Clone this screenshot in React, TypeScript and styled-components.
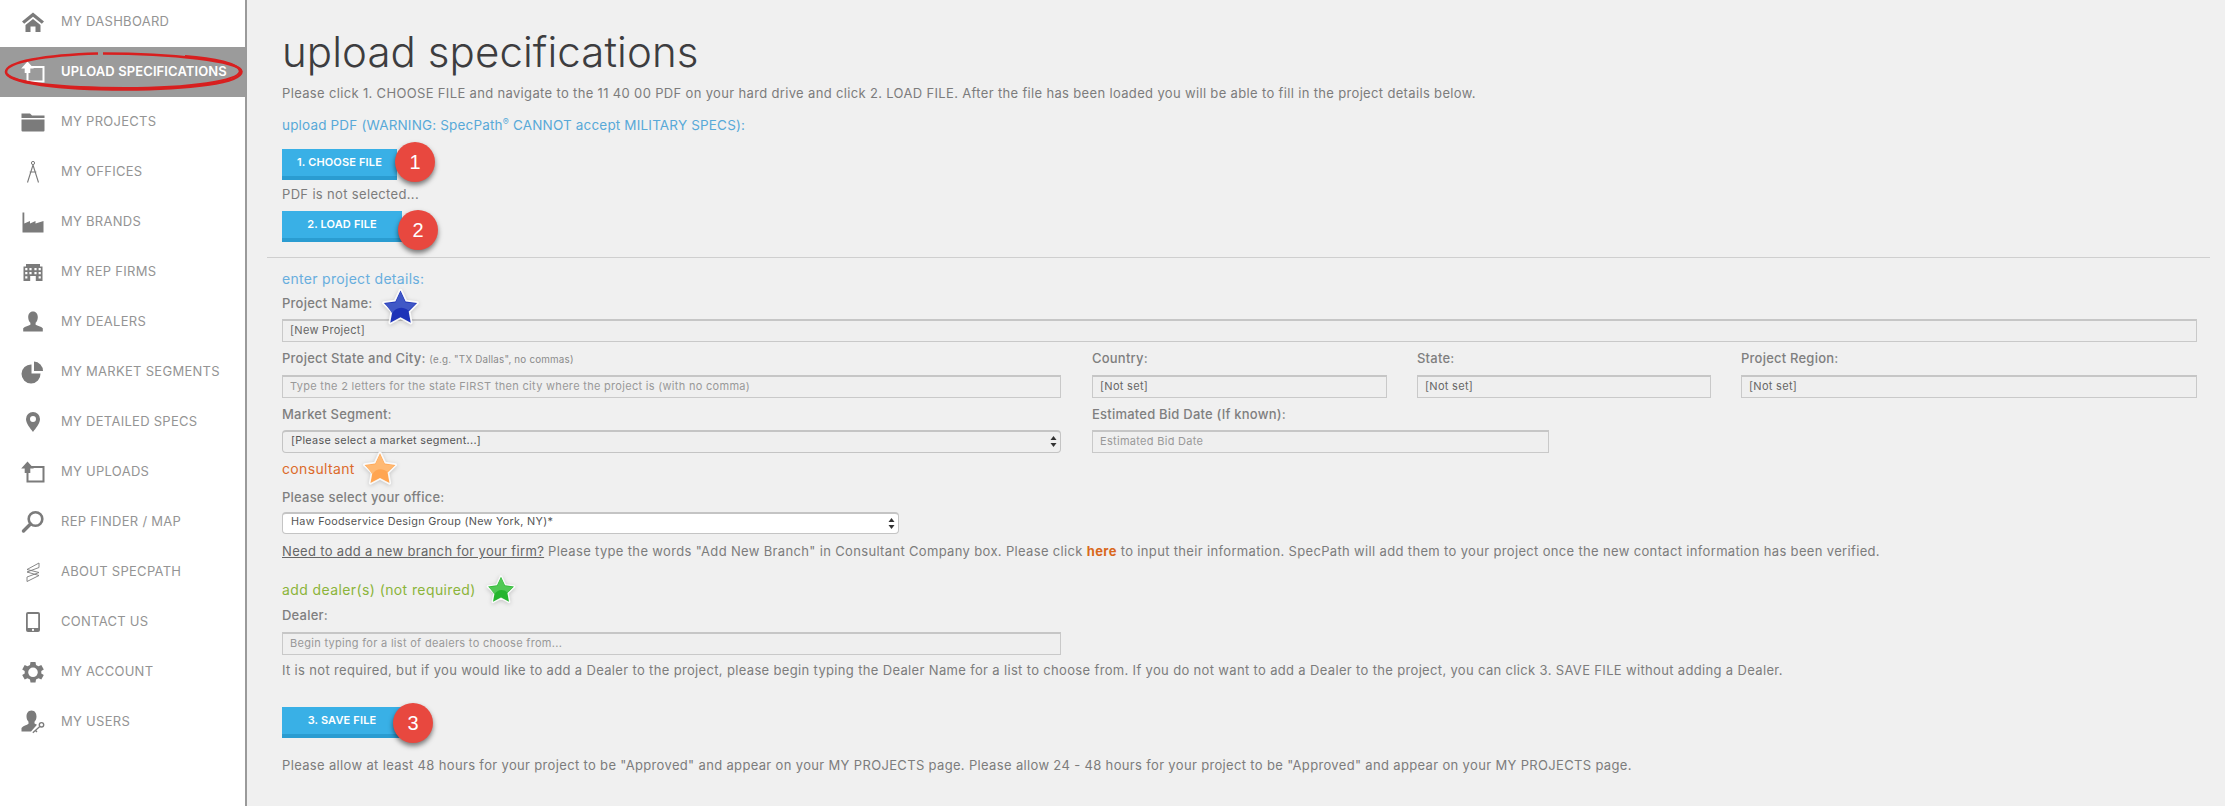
import React from "react";
import styled, { createGlobalStyle } from "styled-components";

const Global = createGlobalStyle`
  html, body { margin: 0; padding: 0; background: #f0f0f0; }
  body { font-family: Inter, "Noto Sans", "Liberation Sans", sans-serif; overflow: hidden; }
  * { box-sizing: border-box; }
`;

const Page = styled.div`
  display: flex;
  width: 2225px;
  height: 806px;
  overflow: hidden;
`;

const Sidebar = styled.nav`
  width: 247px;
  flex: none;
  background: #fff;
  border-right: 2px solid #9a9a9a;
  padding-top: 0;
`;

const NavList = styled.div`
  margin-top: -3px;
  display: flex;
  flex-direction: column;
`;

const NavRow = styled.div<{ $active?: boolean }>`
  position: relative;
  height: 50px;
  display: flex;
  align-items: center;
  padding: 0 0 3px 20px;
  gap: 15px;
  background: ${(p) => (p.$active ? "#9b9b9b" : "transparent")};
  color: ${(p) => (p.$active ? "#fff" : "#949494")};
  font-size: 13px;
  font-weight: ${(p) => (p.$active ? 600 : 400)};
  letter-spacing: ${(p) => (p.$active ? 0.1 : 0.28)}px;
  white-space: nowrap;
`;

const NavIcon = styled.svg`
  width: 26px;
  height: 26px;
  flex: none;
  margin-top: 3px;
  fill: currentColor;
`;

const IconTint = styled.g<{ $active?: boolean }>`
  color: ${(p) => (p.$active ? "#fff" : "#7b7b7b")};
`;

const Scribble = styled.svg`
  position: absolute;
  left: 0;
  top: 0;
  width: 245px;
  height: 50px;
`;

const Main = styled.main`
  flex: 1;
  min-width: 0;
  padding: 22px 0 0 35px;
  color: #7c7c7c;
`;

const Title = styled.h1`
  margin: 0;
  height: 60px;
  line-height: 60px;
  font-size: 42px;
  font-weight: 300;
  letter-spacing: 0.08px;
  color: #3d3d3f;
`;

const Text = styled.p<{ $mt: number }>`
  position: relative;
  margin: ${(p) => p.$mt}px 0 0;
  height: 18px;
  line-height: 18px;
  font-size: 13px;
  letter-spacing: 0.34px;
  color: #7c7c7c;
  white-space: nowrap;
`;

const Heading = styled.h2<{ $mt: number; $color: string; $size?: number; $ls?: number }>`
  position: relative;
  margin: ${(p) => p.$mt}px 0 0;
  height: 18px;
  line-height: 18px;
  font-size: ${(p) => p.$size ?? 14}px;
  font-weight: 400;
  letter-spacing: ${(p) => p.$ls ?? 0.35}px;
  color: ${(p) => p.$color};
  white-space: nowrap;
`;

const Sup = styled.sup`
  font-size: 9px;
  line-height: 0;
`;

const Underlined = styled.span`
  text-decoration: underline;
  color: #666;
`;

const Here = styled.b`
  color: #d9681d;
`;

const ButtonWrap = styled.div<{ $mt: number; $w: number }>`
  position: relative;
  margin-top: ${(p) => p.$mt}px;
  width: ${(p) => p.$w}px;
  height: 31px;
`;

const Button = styled.button`
  width: 100%;
  height: 31px;
  padding: 0 0 1px;
  border: 0;
  border-bottom: 4px solid #2a9cd1;
  background: #39b0e6;
  color: #fff;
  font: 600 11px Inter, sans-serif;
  letter-spacing: 0.15px;
`;

const Badge = styled.span<{ $left: number; $top: number }>`
  position: absolute;
  left: ${(p) => p.$left}px;
  top: ${(p) => p.$top}px;
  width: 40px;
  height: 40px;
  border-radius: 50%;
  background: #e8483f;
  box-shadow: 0 3px 5px rgba(0, 0, 0, 0.5);
  color: #fff;
  font: 400 20px/40px "Liberation Sans", sans-serif;
  text-align: center;
`;

const Rule = styled.hr`
  margin: 15px 0 0 -15px;
  width: 1943px;
  height: 1px;
  border: 0;
  background: #cfcfcf;
`;

const FieldRow = styled.div<{ $mt: number }>`
  display: flex;
  gap: 30px;
  margin-top: ${(p) => p.$mt}px;
`;

const Field = styled.div<{ $w: number; $mr?: number }>`
  width: ${(p) => p.$w}px;
  margin-right: ${(p) => p.$mr ?? 0}px;
  flex: none;
  display: flex;
  flex-direction: column;
  gap: 7.5px;
`;

const Label = styled.label`
  display: block;
  height: 18px;
  line-height: 18px;
  font-size: 13px;
  font-weight: 500;
  letter-spacing: 0.22px;
  color: #7f7f7f;
  white-space: nowrap;
`;

const Hint = styled.span`
  font-size: 9.8px;
  font-weight: 400;
  letter-spacing: 0.2px;
  color: #8a8a8a;
`;

const Input = styled.input<{ $w?: number; $mt?: number }>`
  display: block;
  width: ${(p) => (p.$w ? `${p.$w}px` : "100%")};
  height: 23px;
  margin-top: ${(p) => p.$mt ?? 0}px;
  padding: 0 7px 2px;
  border: 1px solid #c9c9c9;
  border-top: 2px solid #c6c6c6;
  border-radius: 0;
  background: #efefef;
  color: #666;
  font: 400 11px Inter, sans-serif;
  letter-spacing: 0.3px;
  outline: none;
  &::placeholder { color: #999; opacity: 1; }
`;

const SelectBox = styled.div<{ $w: number; $white?: boolean; $mt?: number }>`
  position: relative;
  width: ${(p) => p.$w}px;
  height: ${(p) => (p.$white ? 22 : 23)}px;
  margin-top: ${(p) => p.$mt ?? 0}px;
  border: 1px solid #c4c4c4;
  border-top-width: 2px;
  border-radius: 4px;
  background: ${(p) => (p.$white ? "#fff" : "#efefef")};
  color: #555;
  font-size: 10.8px;
  line-height: ${(p) => (p.$white ? 16 : 18)}px;
  letter-spacing: 0.3px;
  padding-left: 8px;
  white-space: nowrap;
`;

const Arrows = styled.svg`
  position: absolute;
  right: 3px;
  top: 4px;
  width: 7px;
  height: 11px;
  fill: #333;
`;

const StarMark = styled.svg<{ $left: number; $top: number; $size: number }>`
  position: absolute;
  left: ${(p) => p.$left}px;
  top: ${(p) => p.$top}px;
  width: ${(p) => p.$size}px;
  height: ${(p) => p.$size}px;
  filter: drop-shadow(0 1px 2px rgba(0, 0, 0, 0.2));
  overflow: visible;
`;

const STAR = "M20 3.5 25 14.2 36.2 15.700 28 23.800 30 34.800 20 29.500 10 34.800 12 23.800 3.800 15.700 15 14.200Z";
const GLOSS = "M20 4.500 24.800 15 35 16.200 27.800 23C22 18 15 20 11.800 25.500L5 16.200 15.200 15Z";

const Star = ({ left, top, size, base, light }: { left: number; top: number; size: number; base: string; light: string }) => (
  <StarMark $left={left} $top={top} $size={size} viewBox="0 0 40 40">
    <path d={STAR} fill="#fff" fillOpacity="0.85" stroke="#fff" strokeOpacity="0.85" strokeWidth="3.500" strokeLinejoin="round" />
    <path d={STAR} fill={base} />
    <path d={GLOSS} fill={light} />
  </StarMark>
);

const icons: Record<string, React.ReactNode> = {
  home: (
    <>
      <path d="M13 3.5 24 12.5 21.8 14.8 13 7.8 4.2 14.8 2 12.5Z" />
      <path d="M13 10 20.5 16V23H15.5V17.5H10.5V23H5.5V16Z" />
    </>
  ),
  upload: (
    <>
      <path d="M11 8H23.5V22.5H7.5V13.500" fill="none" stroke="currentColor" strokeWidth="2" />
      <path d="M7.500 2.500 13.800 9.500H10.300V14H4.700V9.500H1.200Z" />
    </>
  ),
  folder: (
    <>
      <path d="M1.5 4.5H10L12 6.5H24.5V9H1.5Z" />
      <path d="M1.5 10.5H24.5V21.5Q24.5 22.5 23.5 22.5H2.5Q1.5 22.5 1.5 21.5Z" />
    </>
  ),
  compass: (
    <>
      <circle cx="13" cy="4" r="1.6" fill="none" stroke="currentColor" strokeWidth="1" />
      <path d="M13 6 7.5 23.5M13 6 18.5 23.5M9.7 13 16.3 13" fill="none" stroke="currentColor" strokeWidth="1.1" />
    </>
  ),
  factory: <path d="M2.5 3.5H4.3V14.5L10 12V14.5L15.5 12V14.5L23.5 12V23.5H2.5Z" />,
  building: (
    <path
      fillRule="evenodd"
      d="M6 5H20V7.500H22.500V22H15.800V17H10.200V22H3.500V7.500H6ZM5.200 9V11.200H7.400V9ZM9.400 9V11.200H11.600V9ZM14.400 9V11.200H16.600V9ZM18.600 9V11.200H20.800V9ZM5.200 13V15.200H7.400V13ZM9.400 13V15.200H11.600V13ZM14.400 13V15.200H16.600V13ZM18.600 13V15.200H20.800V13ZM5.200 17.200V19.400H7.400V17.200ZM18.600 17.200V19.400H20.800V17.200Z"
    />
  ),
  person: (
    <path d="M13 2.5C16.2 2.5 17.8 5 17.8 8.2 17.8 10.8 16.6 12.8 15.6 13.8V15.8C17.5 16.8 21 17.5 22.8 19.2V22.5H3.2V19.2C5 17.5 8.5 16.8 10.4 15.8V13.8C9.4 12.8 8.2 10.8 8.2 8.2 8.2 5 9.8 2.5 13 2.5Z" />
  ),
  pie: (
    <>
      <path d="M11.5 5.5V14.5H20.5A9.5 9.5 0 1 1 11.5 5.5Z" />
      <path d="M14 2.5A9.5 9.5 0 0 1 23 12H14Z" />
    </>
  ),
  pin: (
    <path
      fillRule="evenodd"
      d="M13 3A7 7 0 0 1 20 10C20 14.5 15.5 19.5 13 23 10.500 19.500 6 14.500 6 10A7 7 0 0 1 13 3ZM13 7A3 3 0 1 0 13 13 3 3 0 1 0 13 7Z"
    />
  ),
  magnifier: (
    <>
      <circle cx="15.5" cy="10" r="6.8" fill="none" stroke="currentColor" strokeWidth="2.6" />
      <path d="M10.5 15 3.5 22" fill="none" stroke="currentColor" strokeWidth="3.4" strokeLinecap="round" />
    </>
  ),
  spec: (
    <path
      d="M19 4 7 10.500 19 13.500 7 18 7 22.500 19 16.500 7 13 19 8.500Z"
      fill="none"
      stroke="currentColor"
      strokeWidth="0.9"
      strokeLinejoin="round"
    />
  ),
  phone: (
    <path
      fillRule="evenodd"
      d="M8 3H18Q20 3 20 5V21Q20 23 18 23H8Q6 23 6 21V5Q6 3 8 3ZM7.800 5V19H18.200V5ZM13 19.800A1.100 1.100 0 1 0 13 22 1.100 1.100 0 1 0 13 19.800Z"
    />
  ),
  gear: (
    <path
      fillRule="evenodd"
      d="M10.500 3H15.500L16 6 18.500 7.300 21.300 6 23.800 10.500 21.300 12V14.500L23.800 16 21.300 20.500 18.500 19.200 16 20.500 15.500 23.500H10.500L10 20.500 7.500 19.200 4.700 20.500 2.200 16 4.700 14.500V12L2.200 10.500 4.700 6 7.500 7.300 10 6ZM13 8.500A4.800 4.800 0 1 0 13 18.100 4.800 4.800 0 1 0 13 8.500Z"
    />
  ),
  userKey: (
    <>
      <path d="M11.500 1.500C15 1.500 16.500 4.500 16.500 7.500 16.500 10 15.500 11.700 14.500 12.800V14.500L17 15.700 11 22.500H1.500V19C3 17 7 16 8.500 14.800V12.800C7.500 11.700 6.500 10 6.500 7.500 6.500 4.500 8 1.500 11.500 1.500Z" />
      <circle cx="21.500" cy="15.800" r="2.200" fill="none" stroke="currentColor" strokeWidth="1.400" />
      <path d="M19.800 17.500 12.800 23.800M15.500 21.500 17 23" fill="none" stroke="currentColor" strokeWidth="1.300" />
    </>
  ),
};

const NAV: [string, string][] = [
  ["home", "MY DASHBOARD"],
  ["upload", "UPLOAD SPECIFICATIONS"],
  ["folder", "MY PROJECTS"],
  ["compass", "MY OFFICES"],
  ["factory", "MY BRANDS"],
  ["building", "MY REP FIRMS"],
  ["person", "MY DEALERS"],
  ["pie", "MY MARKET SEGMENTS"],
  ["pin", "MY DETAILED SPECS"],
  ["upload", "MY UPLOADS"],
  ["magnifier", "REP FINDER / MAP"],
  ["spec", "ABOUT SPECPATH"],
  ["phone", "CONTACT US"],
  ["gear", "MY ACCOUNT"],
  ["userKey", "MY USERS"],
];

const SelectArrows = () => (
  <Arrows viewBox="0 0 7 11">
    <path d="M3.500 0 6.500 4H.5ZM3.500 11 .5 7H6.500Z" />
  </Arrows>
);

export default function App() {
  return (
    <Page>
      <Global />
      <Sidebar>
        <NavList>
          {NAV.map(([icon, label], i) => {
            const active = i === 1;
            return (
              <NavRow key={label} $active={active}>
                <NavIcon viewBox="0 0 26 26">
                  <IconTint $active={active}>{icons[icon]}</IconTint>
                </NavIcon>
                {label}
                {active && (
                  <Scribble viewBox="0 0 245 50">
                    <path
                      d="M98 6.500C45 8 6 15 6 25 6 36 60 42.500 125 42.500 190 42.500 241.500 36 241.500 24.500 241.500 14 170 6.500 103 6.500"
                      fill="none"
                      stroke="#d81f1f"
                      strokeWidth="2.600"
                    />
                    <path
                      d="M7 27C14 36 60 41 125 41 190 41 239 34 240 24 239 17 215 11 185 9"
                      fill="none"
                      stroke="#d81f1f"
                      strokeWidth="2.200"
                    />
                  </Scribble>
                )}
              </NavRow>
            );
          })}
        </NavList>
      </Sidebar>
      <Main>
        <Title>upload specifications</Title>
        <Text $mt={2}>
          Please click 1. CHOOSE FILE and navigate to the 11 40 00 PDF on your hard drive and click 2. LOAD FILE. After the file has been loaded you will be able to fill in the project details below.
        </Text>
        <Heading $mt={14} $color="#58a9d8" $size={13.5} $ls={0.17}>
          upload PDF (WARNING: SpecPath<Sup>®</Sup> CANNOT accept MILITARY SPECS):
        </Heading>
        <ButtonWrap $mt={15} $w={115}>
          <Button>1. CHOOSE FILE</Button>
          <Badge $left={113} $top={-7}>1</Badge>
        </ButtonWrap>
        <Text $mt={5}>PDF is not selected...</Text>
        <ButtonWrap $mt={8} $w={120}>
          <Button>2. LOAD FILE</Button>
          <Badge $left={116} $top={-1}>2</Badge>
        </ButtonWrap>
        <Rule />
        <Heading $mt={12} $color="#68aede" $size={14} $ls={0.3}>enter project details:</Heading>
        <Text $mt={6}>
          <Label>Project Name:</Label>
          <Star left={98} top={-7} size={41} base="#1e33b8" light="#4058c6" />
        </Text>
        <Input $w={1915} $mt={7} readOnly defaultValue="[New Project]" />
        <FieldRow $mt={7}>
          <Field $w={779} $mr={1}>
            <Label>
              Project State and City: <Hint>(e.g. "TX Dallas", no commas)</Hint>
            </Label>
            <Input readOnly placeholder="Type the 2 letters for the state FIRST then city where the project is (with no comma)" />
          </Field>
          <Field $w={295}>
            <Label>Country:</Label>
            <Input readOnly defaultValue="[Not set]" />
          </Field>
          <Field $w={294}>
            <Label>State:</Label>
            <Input readOnly defaultValue="[Not set]" />
          </Field>
          <Field $w={456}>
            <Label>Project Region:</Label>
            <Input readOnly defaultValue="[Not set]" />
          </Field>
        </FieldRow>
        <FieldRow $mt={7}>
          <Field $w={779} $mr={1}>
            <Label>Market Segment:</Label>
            <SelectBox $w={779}>
              [Please select a market segment...]
              <SelectArrows />
            </SelectBox>
          </Field>
          <Field $w={457}>
            <Label>Estimated Bid Date (If known):</Label>
            <Input readOnly placeholder="Estimated Bid Date" />
          </Field>
        </FieldRow>
        <Heading $mt={7} $color="#dc6a2a" $size={14}>
          consultant
          <Star left={79} top={-10} size={38} base="#ffa552" light="#ffb973" />
        </Heading>
        <Text $mt={10}>
          <Label>Please select your office:</Label>
        </Text>
        <SelectBox $w={617} $white $mt={6}>
          Haw Foodservice Design Group (New York, NY)*
          <SelectArrows />
        </SelectBox>
        <Text $mt={8}>
          <Underlined>Need to add a new branch for your firm?</Underlined> Please type the words "Add New Branch" in Consultant Company box. Please click <Here>here</Here> to input their information. SpecPath will add them to your project once the new contact information has been verified.
        </Text>
        <Heading $mt={21} $color="#8bb43a" $size={14} $ls={0.4}>
          add dealer(s) (not required)
          <Star left={203} top={-7} size={32} base="#25b52e" light="#50c854" />
        </Heading>
        <Text $mt={7}>
          <Label>Dealer:</Label>
        </Text>
        <Input $w={779} $mt={8} readOnly placeholder="Begin typing for a list of dealers to choose from..." />
        <Text $mt={6}>
          It is not required, but if you would like to add a Dealer to the project, please begin typing the Dealer Name for a list to choose from. If you do not want to add a Dealer to the project, you can click 3. SAVE FILE without adding a Dealer.
        </Text>
        <ButtonWrap $mt={28} $w={120}>
          <Button>3. SAVE FILE</Button>
          <Badge $left={111} $top={-4}>3</Badge>
        </ButtonWrap>
        <Text $mt={18}>
          Please allow at least 48 hours for your project to be "Approved" and appear on your MY PROJECTS page. Please allow 24 - 48 hours for your project to be "Approved" and appear on your MY PROJECTS page.
        </Text>
      </Main>
    </Page>
  );
}
